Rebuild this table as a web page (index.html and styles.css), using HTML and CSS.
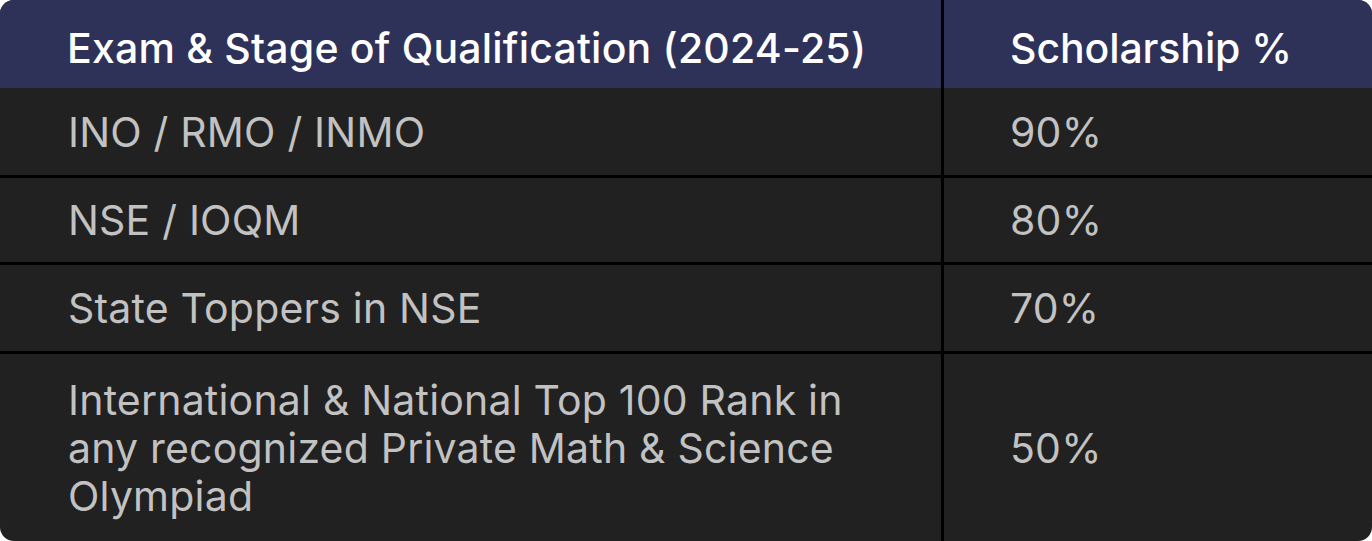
FILE: index.html
```html
<!DOCTYPE html>
<html lang="en">
<head>
<meta charset="utf-8">
<title>Scholarship Table</title>
<link rel="stylesheet" href="styles.css">
</head>
<body>
<div class="wrap">
  <table class="sch">
    <colgroup><col class="c1"><col class="c2"></colgroup>
    <thead>
      <tr class="r-head">
        <th class="left">Exam &amp; Stage of Qualification (2024-25)</th>
        <th>Scholarship %</th>
      </tr>
    </thead>
    <tbody>
      <tr class="r1"><td class="left">INO / RMO / INMO</td><td>90%</td></tr>
      <tr class="r2"><td class="left">NSE / IOQM</td><td>80%</td></tr>
      <tr class="r3"><td class="left">State Toppers in NSE</td><td>70%</td></tr>
      <tr class="r4"><td class="left multi">International &amp; National Top 100 Rank in<br>any recognized Private Math &amp; Science<br>Olympiad</td><td>50%</td></tr>
    </tbody>
  </table>
</div>
</body>
</html>
```
FILE: styles.css
```css
html, body {
  margin: 0;
  padding: 0;
  background: #ffffff;
}
.wrap {
  width: 1372px;
  height: 541px;
  border-radius: 14px;
  overflow: hidden;
  background: #212121;
}
.sch {
  width: 1372px;
  border-collapse: separate;
  border-spacing: 0;
  table-layout: fixed;
  font-family: "Inter", "Noto Sans", sans-serif;
  font-size: 41px;
  letter-spacing: 0.2px;
}
.c1 { width: 944px; }
.c2 { width: 428px; }
th, td {
  padding: 0 0 0 66px;
  text-align: left;
  vertical-align: middle;
  box-sizing: border-box;
}
th {
  background: #2f3258;
  color: #ffffff;
  font-weight: 500;
  height: 88px;
  padding-top: 8px;
}
th.left { padding-left: 67px; }
th + th { letter-spacing: -0.1px; }
td {
  color: #c2c2c2;
  font-weight: 400;
  border-bottom: 3px solid #000;
}
td.left { padding-left: 68px; }
.left { border-right: 3px solid #000; }
.r1 td { height: 90px; }
.r2 td { height: 87px; }
.r3 td { height: 89px; }
.r4 td { height: 187px; border-bottom: 0; }
.multi { line-height: 48px; }
```
